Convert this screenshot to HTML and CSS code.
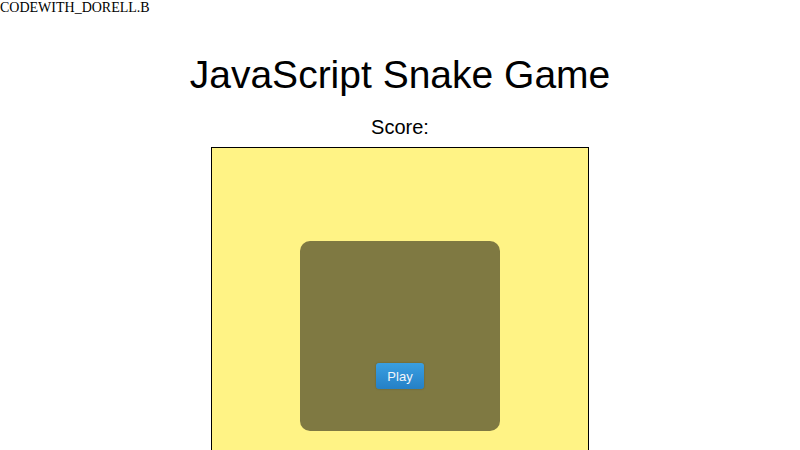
FILE: index.html
```html
<!DOCTYPE html>
<html>
<head>
<meta charset="utf-8">
<link rel="stylesheet" href="styles.css">
</head>
<body>
<div class="brand">CODEWITH_DORELL.B</div>
<h1 class="title">JavaScript Snake Game</h1>
<p class="score">Score:</p>
<div class="board">
  <div class="overlay">
    <button class="play">Play</button>
  </div>
</div>
</body>
</html>
```
FILE: styles.css
```css
html, body {
  margin: 0;
  padding: 0;
  background: #ffffff;
}
body {
  overflow: hidden;
  height: 450px;
}
.brand {
  font-family: "Liberation Serif", serif;
  font-size: 14px;
  line-height: 16px;
  color: #000;
}
.title {
  font-family: "Liberation Sans", Arial, sans-serif;
  font-weight: normal;
  font-size: 39px;
  line-height: 45px;
  text-align: center;
  margin: 36px 0 0 0;
  color: #000;
}
.score {
  font-family: "Liberation Sans", Arial, sans-serif;
  font-size: 20px;
  line-height: 23px;
  text-align: center;
  margin: 19px 0 0 0;
  color: #000;
}
.board {
  width: 376px;
  height: 376px;
  margin: 8px auto 0 auto;
  border: 1px solid #000;
  background: #fff385;
  display: flex;
  align-items: center;
  justify-content: center;
}
.overlay {
  width: 200px;
  height: 190px;
  box-sizing: border-box;
  border-radius: 10px;
  background: rgba(0, 0, 0, 0.5);
  display: flex;
  flex-direction: column;
  align-items: center;
  justify-content: flex-end;
  padding-bottom: 42px;
}
.play {
  width: 48px;
  height: 26px;
  padding: 0;
  border: none;
  border-radius: 3px;
  background: linear-gradient(#3a9fe2, #2580c6);
  color: #f2f6fa;
  font-family: "Liberation Sans", Arial, sans-serif;
  font-size: 13px;
  box-shadow: 0 0 2px rgba(0, 0, 0, 0.25);
}
```
